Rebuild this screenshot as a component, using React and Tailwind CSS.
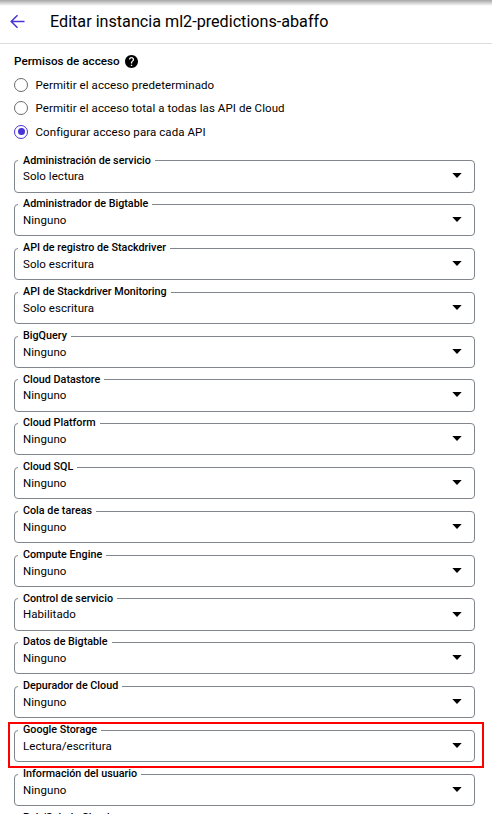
const permissions = [
  { label: "Administración de servicio", value: "Solo lectura" },
  { label: "Administrador de Bigtable", value: "Ninguno" },
  { label: "API de registro de Stackdriver", value: "Solo escritura" },
  { label: "API de Stackdriver Monitoring", value: "Solo escritura" },
  { label: "BigQuery", value: "Ninguno" },
  { label: "Cloud Datastore", value: "Ninguno" },
  { label: "Cloud Platform", value: "Ninguno" },
  { label: "Cloud SQL", value: "Ninguno" },
  { label: "Cola de tareas", value: "Ninguno" },
  { label: "Compute Engine", value: "Ninguno" },
  { label: "Control de servicio", value: "Habilitado" },
  { label: "Datos de Bigtable", value: "Ninguno" },
  { label: "Depurador de Cloud", value: "Ninguno" },
  { label: "Google Storage", value: "Lectura/escritura", highlighted: true },
  { label: "Información del usuario", value: "Ninguno" },
  { label: "Pub/Sub de Cloud", value: "Ninguno" },
];

const accessOptions = [
  { label: "Permitir el acceso predeterminado", row: "h-[23px]" },
  { label: "Permitir el acceso total a todas las API de Cloud", row: "h-[24px]" },
  { label: "Configurar acceso para cada API", row: "h-[23px]", checked: true },
];

function Radio({ label, row, checked }) {
  return (
    <label className={`flex items-center gap-[7.5px] ${row}`}>
      <span
        className={`flex size-[14px] shrink-0 items-center justify-center rounded-full border ${
          checked ? "border-[#4733d6]" : "border-[#6b6b6b]"
        }`}
      >
        {checked && <span className="size-[7px] rounded-full bg-[#4733d6]" />}
      </span>
      <span className="text-[11.5px] leading-4 tracking-[0.08px]">{label}</span>
    </label>
  );
}

function SelectField({ label, value, highlighted }) {
  return (
    <div className="h-[43.8125px] shrink-0">
      <div className="relative flex h-[32.28125px] items-center justify-between rounded-[4px] border border-[#80868b] pl-2 pr-3">
        <span className="absolute -top-[7.71875px] left-[3px] bg-white pl-[5px] pr-1 text-[10.75px] font-medium leading-[14px] whitespace-nowrap">
          {label}
        </span>
        <span className="mb-[0.125px] text-[11.5px] leading-4 tracking-[0.05px]">{value}</span>
        <svg className="mb-[1px] h-[5px] w-[10px]" viewBox="0 0 10 5">
          <path d="M0.3 0h9.4L5 5z" fill="#000" />
        </svg>
        {highlighted && (
          <span className="pointer-events-none absolute -top-[9px] -right-[10px] -left-[7px] z-10 h-[46px] border-2 border-[#ff0000]" />
        )}
      </div>
    </div>
  );
}

export default function App() {
  return (
    <div className="flex h-[814px] w-[492px] flex-col overflow-hidden bg-white font-['Roboto',sans-serif] text-black">
      <div className="h-[6px] shrink-0 bg-linear-to-b from-[#a6a6a6] to-white" />
      <header className="flex h-[38px] shrink-0 items-center border-b border-[#dadce0] pb-[6px] pl-[10px]">
        <svg className="size-[15px]" viewBox="0 0 15 15" fill="none" stroke="#4733d6" strokeWidth="1.5">
          <path d="M14.5 7.5H1.5M7.5 1.2L1.2 7.5l6.3 6.3" />
        </svg>
        <h1 className="ml-[25px] text-[16.17px] leading-5 whitespace-nowrap">
          Editar instancia ml2-predictions-abaffo
        </h1>
      </header>
      <main className="flex min-h-0 flex-1 flex-col pr-[17px] pl-[14px]">
        <div className="mt-[10px] flex h-[14px] shrink-0 items-center gap-[5px]">
          <h2 className="text-[11.7px] leading-[14px] font-medium">Permisos de acceso</h2>
          <svg className="size-[13px]" viewBox="2 2 20 20">
            <path
              fill="#000"
              d="M12 2C6.48 2 2 6.48 2 12s4.48 10 10 10 10-4.48 10-10S17.52 2 12 2zm1 17h-2v-2h2v2zm2.07-7.75l-.9.92C13.45 12.9 13 13.5 13 15h-2v-.5c0-1.1.45-2.1 1.17-2.83l1.24-1.26c.37-.36.59-.86.59-1.41 0-1.1-.9-2-2-2s-2 .9-2 2H8c0-2.21 1.79-4 4-4s4 1.79 4 4c0 .88-.36 1.68-.93 2.25z"
            />
          </svg>
        </div>
        <div className="mt-[5px] flex shrink-0 flex-col">
          {accessOptions.map((option) => (
            <Radio key={option.label} {...option} />
          ))}
        </div>
        <div className="mt-[17.25px] flex shrink-0 flex-col">
          {permissions.map((permission) => (
            <SelectField key={permission.label} {...permission} />
          ))}
        </div>
      </main>
    </div>
  );
}
